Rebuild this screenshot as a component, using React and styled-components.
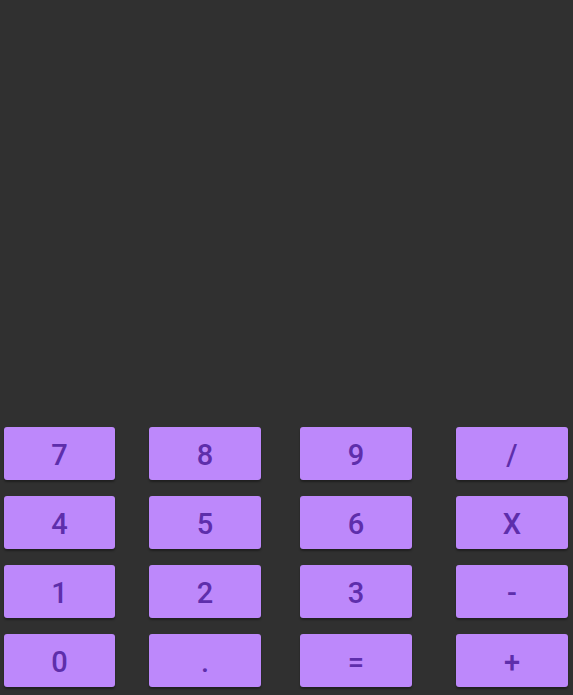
import React from "react";
import styled, { createGlobalStyle } from "styled-components";

const GlobalStyle = createGlobalStyle`
  html, body {
    margin: 0;
    padding: 0;
    background-color: #303030;
  }
  #root {
    height: 100vh;
  }
`;

const Screen = styled.div`
  height: 100%;
  display: flex;
  flex-direction: column;
  justify-content: flex-end;
  background-color: #303030;
  font-family: Roboto, "Liberation Sans", sans-serif;
`;

const Keypad = styled.div`
  display: flex;
  padding-bottom: 8px;
`;

const Column = styled.div`
  display: flex;
  flex-direction: column;
  gap: 16px;
  margin-left: ${(p) => p.$offset}px;
  width: ${(p) => p.$width}px;
`;

const Key = styled.button`
  height: 53px;
  border: none;
  border-radius: 3px;
  background-color: #bd88fb;
  color: #5e2eab;
  font-family: inherit;
  font-size: 29px;
  font-weight: 500;
  display: flex;
  align-items: center;
  justify-content: center;
  padding: 3px 0 0;
  box-shadow: 0 2px 2px rgba(0, 0, 0, 0.35);
  cursor: pointer;
`;

const columns = [
  { offset: 4, width: 111, keys: ["7", "4", "1", "0"] },
  { offset: 34, width: 112, keys: ["8", "5", "2", "."] },
  { offset: 39, width: 112, keys: ["9", "6", "3", "="] },
  { offset: 44, width: 112, keys: ["/", "X", "-", "+"] },
];

function App() {
  return (
    <>
      <GlobalStyle />
      <Screen>
        <Keypad>
          {columns.map((col, i) => (
            <Column key={i} $offset={col.offset} $width={col.width}>
              {col.keys.map((k) => (
                <Key key={k}>{k}</Key>
              ))}
            </Column>
          ))}
        </Keypad>
      </Screen>
    </>
  );
}

export default App;
